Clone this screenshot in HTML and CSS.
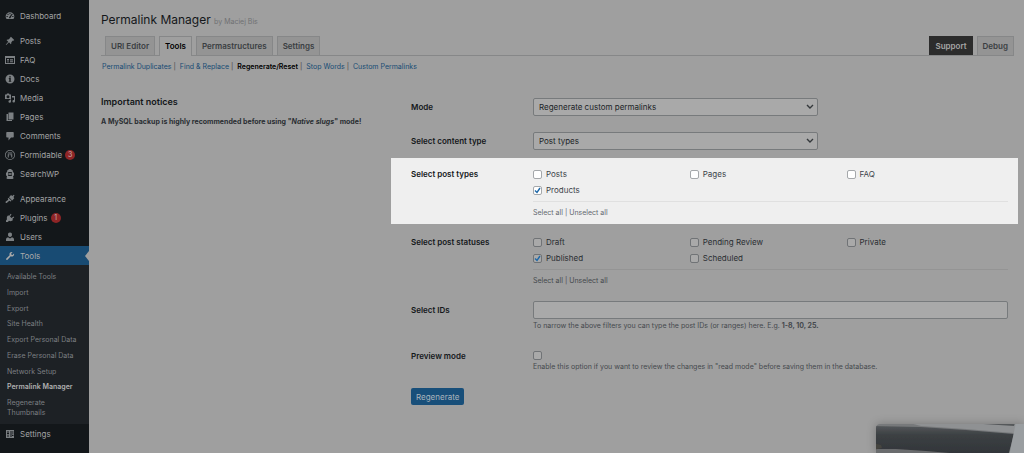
FILE: index.html
```html
<!DOCTYPE html>
<html lang="en">
<head>
<meta charset="utf-8">
<title>Permalink Manager</title>
<link rel="stylesheet" href="styles.css">
</head>
<body>
<div class="admin">
  <nav class="sidebar" aria-label="Main menu">
    <ul class="menu">
      <li><a class="item" href="#"><svg class="icon" viewBox="0 0 20 20"><path fill-rule="evenodd" d="M3 16h14c1-1.500 1.700-3.200 1.700-5A8.700 8.700 0 0 0 1.300 11c0 1.800.7 3.500 1.700 5zM9 4h2v2.500H9zM4.500 6.500l1.500-1.300 1.500 1.800L6 8.300zM14 5.200l1.500 1.300L13.500 8.800l-3 5.500a1.500 1.500 0 0 1-2.300-1.800zM3 10h2.500v2H3zm11.500 0H17v2h-2.500z"/></svg>Dashboard</a></li>
      <li class="gap"><a class="item" href="#"><svg class="icon" viewBox="0 0 20 20"><path d="M10.400 3.100l1.500-1.600 6.600 6.600-1.600 1.500-1.100-.4-3.200 3.200c.5 1.500.2 3-.9 4l-3.700-3.700L2.500 18l-1-.5 5-6L3 8c1-1.100 2.500-1.400 4-.9l3.200-3.200z"/></svg>Posts</a></li>
      <li><a class="item" href="#"><svg class="icon" viewBox="0 0 20 20"><path fill-rule="evenodd" d="M0 2h20v16H0zM2 6v10h16V6zM4 8h4v3H4zm6 0h6v1.500h-6zm0 3h6v1.500h-6zM4 13h4v1.500H4zm6 0h6v1.500h-6z"/></svg>FAQ</a></li>
      <li><a class="item" href="#"><svg class="icon" viewBox="0 0 20 20"><path fill-rule="evenodd" d="M10 1a9 9 0 1 1 0 18 9 9 0 0 1 0-18zM8.500 4.500V7h3V4.500zM7.500 8v1.500h1V14h-1v1.500h5V14h-1V8z"/></svg>Docs</a></li>
      <li><a class="item" href="#"><svg class="icon" viewBox="0 0 20 20"><path fill-rule="evenodd" d="M0 3h3l1-2h4l1 2h3v9H0zm6 1.500a3 3 0 1 0 0 6 3 3 0 0 0 0-6zM14 6h6v10.500a2.500 2.500 0 1 1-2-2.400V9h-4zM10 13h2v4a2.500 2.500 0 1 1-2-2.400z"/></svg>Media</a></li>
      <li><a class="item" href="#"><svg class="icon" viewBox="0 0 20 20"><path d="M7 1h10v14H7zM3 4h3v12h8v2H3z"/></svg>Pages</a></li>
      <li><a class="item" href="#"><svg class="icon" viewBox="0 0 20 20"><path d="M4 2h12q1.500 0 1.500 1.500v8q0 1.500-1.500 1.500h-4l-5 6v-6H4q-1.500 0-1.500-1.500v-8Q2.500 2 4 2z"/></svg>Comments</a></li>
      <li><a class="item" href="#"><svg class="icon" viewBox="0 0 20 20"><path fill-rule="evenodd" d="M10 0a10 10 0 1 1 0 20 10 10 0 0 1 0-20zm0 1.500a8.500 8.500 0 1 0 0 17 8.500 8.500 0 0 0 0-17zM5.500 5h9v2h-9zm0 3.500H9v2H7.500V15h-2zm5 0h4V15h-2v-4.500h-2z"/></svg>Formidable <span class="badge">3</span></a></li>
      <li><a class="item" href="#"><svg class="icon" viewBox="0 0 20 20"><path fill-rule="evenodd" d="M7 0h6v2h2l1 4 2 2v5l-2 1 1 5-2 1H5l-2-1 1-5-2-1V8l2-2 1-4h2zM6 6v8h8V6zM7 7l3 2 3-2v6l-3-2-3 2z"/></svg>SearchWP</a></li>
      <li class="gap"><a class="item" href="#"><svg class="icon" viewBox="0 0 20 20"><path d="M12 2l2.500 2 3-2.500 1.500 1-2 3.500 1.500 2.500-4 4.500-6.500-6.500zM7 7.500l6 6-1.500 1.500-3-1.500L4 17.500q-1.500 1-2.500 0t0-2.500l5-3.500-1-2z"/></svg>Appearance</a></li>
      <li><a class="item" href="#"><svg class="icon" viewBox="0 0 20 20"><path d="M13 3l-3 4 3 3 4-3 1.500 1.500-4 3.500 1.500 1.500c-2 3-5 3.500-8 2L5.500 18H2v-3l2-2.500C3 9 4 6.500 6.500 4.500L8 6l3.500-4.500z"/></svg>Plugins <span class="badge">1</span></a></li>
      <li><a class="item" href="#"><svg class="icon" viewBox="0 0 20 20"><path d="M10 1a4 4 0 0 1 4 4.500c0 2.500-1.700 4.500-4 4.500S6 8 6 5.500A4 4 0 0 1 10 1zM6 10.500l4 2.500 4-2.500q4 1 4 4V18H2v-3.500q0-3 4-4z"/></svg>Users</a></li>
      <li><a class="item current" href="#" aria-current="true"><svg class="icon" viewBox="0 0 20 20"><path d="M16.700 9.800c-1.400 1.400-3.600 1.700-5.300.9L5 17.300q-1.200 1-2.300 0t0-2.400L9.300 8.500C8.600 6.700 8.800 4.600 10.300 3.200c1.300-1.400 3.300-1.700 5-1.100L12.400 5l.5 2.300 2.200.5 2.900-3c.6 1.700.1 3.600-1.300 5z"/></svg>Tools</a>
        <ul class="submenu">
          <li><a href="#">Available Tools</a></li>
          <li><a href="#">Import</a></li>
          <li><a href="#">Export</a></li>
          <li><a href="#">Site Health</a></li>
          <li><a href="#">Export Personal Data</a></li>
          <li><a href="#">Erase Personal Data</a></li>
          <li><a href="#">Network Setup</a></li>
          <li><a class="active" href="#">Permalink Manager</a></li>
          <li><a href="#">Regenerate Thumbnails</a></li>
        </ul>
      </li>
      <li><a class="item" href="#"><svg class="icon" viewBox="0 0 20 20"><path fill-rule="evenodd" d="M2 2h16v16H2zM5 4v4H4v2h4V8H7V4zm0 7v5h2v-5zm6-7v2h2V4zm-1 3v2h4V7zm1 3v6h2v-6zm4-6v7h1.500V4zM14 12v2h3v-2z"/></svg>Settings</a></li>
    </ul>
  </nav>

  <main class="content">
    <h1 class="title">Permalink Manager <a class="author" href="#">by Maciej Bis</a></h1>
    <nav class="tabs" aria-label="Sections">
      <a class="tab" href="#">URI Editor</a>
      <a class="tab selected" href="#">Tools</a>
      <a class="tab" href="#">Permastructures</a>
      <a class="tab" href="#">Settings</a>
      <a class="tab support" href="#">Support</a>
      <a class="tab" href="#">Debug</a>
    </nav>
    <ul class="subnav">
      <li><a href="#">Permalink Duplicates</a></li>
      <li><a href="#">Find &amp; Replace</a></li>
      <li><a class="active" href="#">Regenerate/Reset</a></li>
      <li><a href="#">Stop Words</a></li>
      <li><a href="#">Custom Permalinks</a></li>
    </ul>

    <div class="columns">
      <section class="notices">
        <h2>Important notices</h2>
        <p>A MySQL backup is highly recommended before using "<em>Native slugs</em>" mode!</p>
      </section>

      <form class="form">
        <div class="row">
          <label class="name" for="mode">Mode</label>
          <div class="select">
            <select id="mode"><option>Regenerate custom permalinks</option></select>
            <svg class="arrow" viewBox="0 0 8 6"><path d="M1 1l3 3 3-3"/></svg>
          </div>
        </div>
        <div class="row">
          <label class="name" for="content-type">Select content type</label>
          <div class="select">
            <select id="content-type"><option>Post types</option></select>
            <svg class="arrow" viewBox="0 0 8 6"><path d="M1 1l3 3 3-3"/></svg>
          </div>
        </div>
        <div class="row checks highlight" role="group" aria-labelledby="types">
          <span class="name" id="types">Select post types</span>
          <div>
            <div class="options">
              <label><input type="checkbox">Posts</label>
              <label><input type="checkbox">Pages</label>
              <label><input type="checkbox">FAQ</label>
              <label><input type="checkbox" checked>Products</label>
            </div>
            <p class="bulk"><a href="#">Select all</a> | <a href="#">Unselect all</a></p>
          </div>
        </div>
        <div class="row checks statuses" role="group" aria-labelledby="statuses">
          <span class="name" id="statuses">Select post statuses</span>
          <div>
            <div class="options">
              <label><input type="checkbox">Draft</label>
              <label><input type="checkbox">Pending Review</label>
              <label><input type="checkbox">Private</label>
              <label><input type="checkbox" checked>Published</label>
              <label><input type="checkbox">Scheduled</label>
            </div>
            <p class="bulk"><a href="#">Select all</a> | <a href="#">Unselect all</a></p>
          </div>
        </div>
        <div class="row">
          <label class="name" for="ids">Select IDs</label>
          <div>
            <input class="text" id="ids" type="text">
            <p class="help">To narrow the above filters you can type the post IDs (or ranges) here. E.g. <strong>1-8, 10, 25.</strong></p>
          </div>
        </div>
        <div class="row preview">
          <label class="name" for="preview">Preview mode</label>
          <div>
            <input id="preview" type="checkbox">
            <p class="help">Enable this option if you want to review the changes in "read mode" before saving them in the database.</p>
          </div>
        </div>
        <button class="submit" type="button">Regenerate</button>
      </form>
    </div>
  </main>
</div>

<div class="thumb">
  <svg viewBox="0 0 148 29" preserveAspectRatio="none" aria-hidden="true">
    <defs>
      <linearGradient id="band" x1="0" y1="0" x2="0" y2="1">
        <stop offset="0" stop-color="#54575a"/><stop offset=".3" stop-color="#3c4043"/>
        <stop offset="1" stop-color="#303438"/>
      </linearGradient>
      <filter id="soft"><feGaussianBlur stdDeviation=".7"/></filter>
    </defs>
    <rect width="148" height="29" fill="#77797b"/>
    <g filter="url(#soft)">
      <path d="M-3 2L45 3 90 6 138 10 132 32H-3z" fill="url(#band)"/>
      <path d="M30 -2H142L138 9 90 5 45 2z" fill="#8f9193"/>
      <path d="M92 -1H139L138 2z" fill="#55585a"/>
      <path d="M-3 25L20 25 50 27 85 30 70 32H-3z" fill="#6b6c6e"/>
      <path d="M-3 19l8 2 1 3-9 2z" fill="#45443f"/>
      <path d="M140 -2h12v34h-19z" fill="#9a9ea1"/>
    </g>
  </svg>
</div>
</body>
</html>
```
FILE: styles.css
```css
* { box-sizing: border-box; }

body {
  margin: 0;
  background: #9f9f9f;
  color: #2a2e32;
  font: 8px/10px Inter, "Liberation Sans", sans-serif;
}

ul, p, h1, h2 { margin: 0; padding: 0; list-style: none; }
a { color: inherit; text-decoration: none; }

.admin { display: flex; min-height: 100vh; }

/* Sidebar */
.sidebar { flex: 0 0 89px; background: #13171a; color: #a2a3a4; }
.menu { padding-top: 6px; }
.gap { margin-top: 6px; }
.item { display: flex; align-items: center; height: 19px; padding-left: 5px; }
.icon { width: 10px; height: 10px; margin-right: 5px; fill: #7c8083; }
.badge {
  width: 10px; height: 10px; margin-left: 3px; border-radius: 50%;
  background: #8f2526; color: #c0b0b0; font-size: 7px; text-align: center;
}
.current { position: relative; background: #184b73; color: #aaa; }
.current .icon { fill: #aaa; }
.current::after {
  content: ""; position: absolute; right: 0; top: 5px;
  border: 5px solid transparent; border-left: 0; border-right: 4px solid #9f9f9f;
}
.submenu {
  display: flex; flex-direction: column; justify-content: space-between;
  min-height: 159px; padding: 7px 7px 6px; background: #1d2125;
  color: #7c7f82; font-size: 7px;
}
.submenu .active { color: #b0b0b0; font-weight: 600; }

/* Header */
.content { flex: 1; min-width: 0; padding: 12px 6px 0 12px; }
.title { color: #14171a; font-size: 12px; font-weight: 400; line-height: 16px; }
.author { color: #6f7173; font-size: 7px; }
.tabs {
  display: flex; gap: 4px; margin: 6px 4px 0 0; padding-left: 4px;
  border-bottom: 1px solid #868788;
}
.tab {
  height: 19px; padding: 0 5px; border: 1px solid #868788; border-bottom: 0;
  background: #949494; color: #3a3e42; font-weight: 600; line-height: 18px;
}
.selected { height: 20px; margin-bottom: -1px; background: #9f9f9f; color: #000; }
.support { margin-left: auto; border-color: #2c2c2c; background: #2c2c2c; color: #a6a6a6; }
.subnav { display: flex; margin-top: 5px; padding-left: 1px; font-size: 7px; line-height: 12px; }
.subnav a { color: #174b74; }
.subnav .active { color: #000; font-weight: 600; }
.subnav li + li::before { content: "|"; margin: 0 4px 0 2px; color: #444; }

/* Body */
.columns { display: grid; grid-template-columns: 290px 1fr; margin-top: 17px; }
.notices { padding-top: 6px; }
.notices h2 { color: #14171a; font-size: 9px; font-weight: 600; line-height: 12px; }
.notices p { margin-top: 9px; font-size: 7px; font-weight: 700; }

.row {
  display: grid; grid-template-columns: 122px 1fr; align-items: start;
  padding: 8px 10px 8px 20px;
}
.name { color: #14171a; font-weight: 600; line-height: 18px; }
.select { position: relative; width: 60%; }
.select select {
  display: block; width: 100%; height: 18px; padding: 0 16px 0 5px;
  appearance: none; border: 1px solid #777a7c; border-radius: 2px;
  background: #a9a9a9; color: #202427; font: inherit;
}
.arrow {
  position: absolute; right: 4px; top: 6px; width: 8px; height: 6px;
  fill: none; stroke: #34383b; stroke-width: 1.4; pointer-events: none;
}
.text {
  display: block; width: 100%; height: 18px; padding: 0 5px;
  border: 1px solid #777a7c; border-radius: 2px; background: #a9a9a9; font: inherit;
}
.help { margin-top: 2px; color: #45494d; font-size: 7px; }

.checks { padding-bottom: 6px; }
.checks .name { line-height: 16px; }
.options { display: grid; grid-template-columns: repeat(3, 33%); padding-bottom: 3px; }
.options label { display: flex; align-items: center; gap: 4px; height: 16px; }
input[type="checkbox"] {
  display: block; width: 9px; height: 9px; margin: 0; appearance: none;
  border: 1px solid #707376; border-radius: 2px; background: #a9a9a9;
}
input[type="checkbox"]:checked {
  background-image: url("data:image/svg+xml,%3Csvg xmlns='http://www.w3.org/2000/svg' viewBox='0 0 7 7'%3E%3Cpath d='M1 3.500l2 2 3-4.500' fill='none' stroke='%231d68a8' stroke-width='1.400'/%3E%3C/svg%3E");
}
.bulk { padding-top: 6px; border-top: 1px solid #949494; color: #45494d; font-size: 7px; }

.highlight { background: #efefef; color: #3c434a; }
.highlight input[type="checkbox"] { border-color: #a5a8ab; background-color: #fff; }
.highlight .bulk { border-color: #e0e0e0; color: #646970; }
.statuses { margin: 2px 0 1px; }
.preview { margin-top: 4px; }
.preview .name { line-height: 10px; }

.submit {
  display: block; height: 17px; margin: 8px 0 20px 20px; padding: 0 5px;
  border: 0; border-radius: 2px; background: #184f7a; color: #aab4bc; font: inherit;
}

/* Floating picture in the corner of the window */
.thumb {
  position: fixed; right: 0; bottom: 0; width: 148px; height: 29px; overflow: hidden;
  border-top-left-radius: 4px; box-shadow: 0 0 10px rgba(0, 0, 0, .25);
}
.thumb svg { display: block; width: 100%; height: 100%; }
```
